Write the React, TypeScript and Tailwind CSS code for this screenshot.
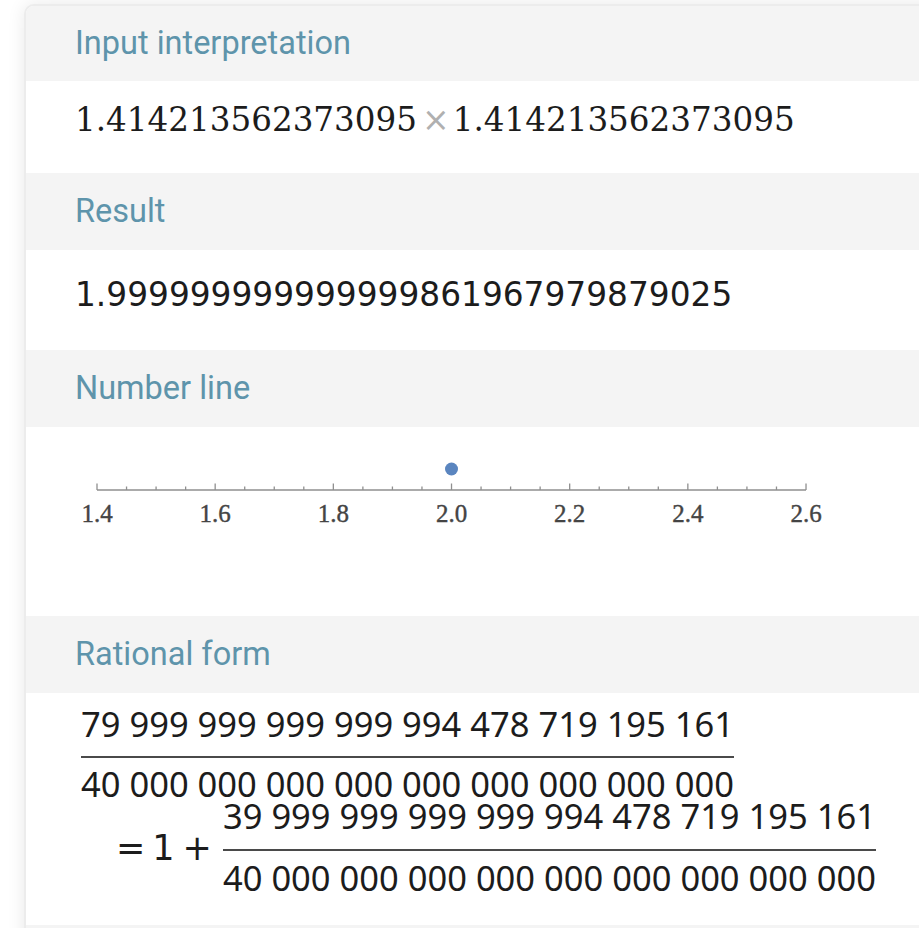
import type { ReactNode } from 'react';

const Header = ({ title, className }: { title: string; className: string }) => (
  <div
    className={`flex items-center bg-[#f4f4f4] pl-[49px] font-['Roboto',sans-serif] text-[32.5px] leading-none text-[#5e94ab] ${className}`}
  >
    {title}
  </div>
);

const Pod = ({ title, headerH, children }: { title: string; headerH: string; children: ReactNode }) => (
  <section>
    <Header title={title} className={headerH} />
    {children}
  </section>
);

const NumberLine = () => {
  const x0 = 22;
  const step = 118.17;
  const labels = ['1.4', '1.6', '1.8', '2.0', '2.2', '2.4', '2.6'];
  return (
    <svg width="760" height="100" viewBox="0 0 760 100">
      <line x1={x0} x2={x0 + 6 * step} y1={43} y2={43} stroke="#8f8f8f" strokeWidth="1.6" />
      {Array.from({ length: 25 }, (_, j) => {
        const x = x0 + (j * step) / 4;
        const major = j % 4 === 0;
        return (
          <line key={j} x1={x} x2={x} y1={major ? 36.5 : 39.5} y2={43} stroke="#8f8f8f" strokeWidth="1.3" />
        );
      })}
      <circle cx={x0 + 3 * step} cy={22} r={6.5} fill="#5a85bf" />
      {labels.map((l, i) => (
        <text
          key={l}
          x={x0 + i * step}
          y={75}
          textAnchor="middle"
          fontFamily="'Liberation Serif', serif"
          fontSize="25"
          fill="#444"
          stroke="#444"
          strokeWidth="0.4"
        >
          {l}
        </text>
      ))}
    </svg>
  );
};

export default function App() {
  return (
    <div className="h-[928px] w-[919px] overflow-hidden bg-white">
      <div className="ml-[24px] mt-[4px] w-[940px] overflow-hidden rounded-[10px] border-2 border-[#ececec] bg-white shadow-[0_0_18px_rgba(0,0,0,0.09)]">
        {/* Input interpretation */}
        <Pod title="Input interpretation" headerH="h-[75px]">
          <div className="h-[92px] whitespace-nowrap pl-[49px] pt-[23px] font-['DejaVu_Serif',serif] text-[32.6px] leading-[32px] text-[#1c1c1c]">
            1.414213562373095
            <span className="ml-[5px] mr-[3px] font-['DejaVu_Sans',sans-serif] text-[33px] leading-[20px] text-[#b0b0b0]">×</span>
            1.414213562373095
          </div>
        </Pod>

        {/* Result */}
        <Pod title="Result" headerH="h-[77px]">
          <div className="h-[100px] whitespace-nowrap pl-[49px] pt-[29px] font-['DejaVu_Sans',sans-serif] text-[32.8px] leading-[32px] text-[#1c1c1c]">
            1.999999999999999861967979879025
          </div>
        </Pod>

        {/* Number line */}
        <Pod title="Number line" headerH="h-[77px]">
          <div className="h-[189px] pl-[49px] pt-[20px]">
            <NumberLine />
          </div>
        </Pod>

        {/* Rational form */}
        <Pod title="Rational form" headerH="h-[77px]">
          <div className="h-[232px] whitespace-nowrap pl-[49px] pt-[16px] font-['Noto_Sans',sans-serif] text-[34.5px] leading-[30px] text-[#1c1c1c]">
            <div className="ml-[6px] flex w-fit flex-col items-center">
              <div>79 999 999 999 999 994 478 719 195 161</div>
              <div className="mt-[17px] h-[2px] w-full bg-[#4a4a4a]" />
              <div className="mt-[11px]">40 000 000 000 000 000 000 000 000 000</div>
            </div>
            <div className="ml-[41px] mt-[2px] flex items-start">
              <div className="mt-[30px] flex font-['DejaVu_Sans',sans-serif] text-[35px] leading-[35px]">
                <span>=</span>
                <span className="ml-[7px]">1</span>
                <span className="ml-[8px]">+</span>
              </div>
              <div className="ml-[11px] flex flex-col items-center">
                <div>39 999 999 999 999 994 478 719 195 161</div>
                <div className="mt-[18px] h-[2px] w-full bg-[#4a4a4a]" />
                <div className="mt-[12px]">40 000 000 000 000 000 000 000 000 000</div>
              </div>
            </div>
          </div>
        </Pod>

        {/* next pod's header, only its top edge is in view */}
        <div className="h-[77px] bg-[#f4f4f4]" />
      </div>
    </div>
  );
}
